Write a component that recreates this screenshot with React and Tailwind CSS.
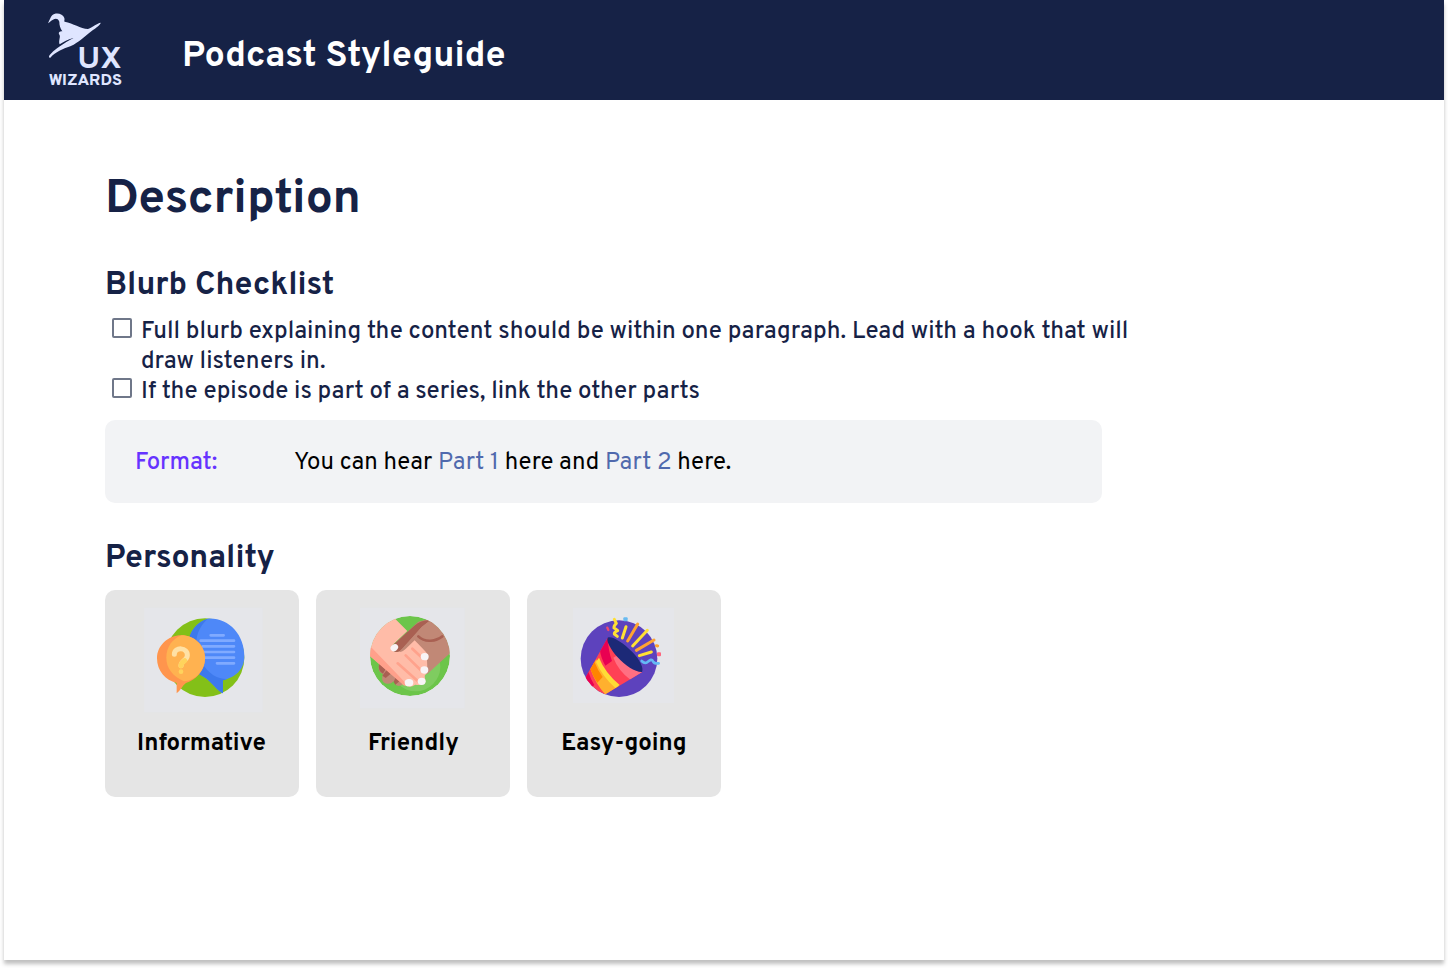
import React from "react";

function Logo() {
  return (
    <svg className="h-[100px] w-[110px] shrink-0" viewBox="0 0 330 300">
      <g fill="#dfe5ff">
        <path d="M54 70C60 58 63 45 73 42C85 38 99 43 103 54C105 60 101 64 104 65C130 70 151 85 174 87C190 80 201 70 212 68C211 75 199 83 185 93C164 109 149 126 121 139C98 147 77 156 61 173C56 174 56 169 59 165C72 149 91 138 109 126L130 114C113 118 101 125 89 133C84 123 93 110 88 104C84 98 88 94 97 94C90 84 88 75 88 65C83 53 75 56 69 59C63 62 59 66 54 70Z" />
        <text x="142" y="203" fontSize="90" fontWeight="700" textLength="134" lengthAdjust="spacingAndGlyphs" className="font-['Overpass','Roboto',sans-serif]">UX</text>
        <text x="56" y="254" fontSize="43" fontWeight="800" textLength="220" lengthAdjust="spacingAndGlyphs" className="font-['Overpass','Roboto',sans-serif]">WIZARDS</text>
      </g>
    </svg>
  );
}

function InformativeArt() {
  return (
    <svg className="h-[137px] w-[194px]" viewBox="105 590 194 137">
      <g transform="translate(140 605) scale(.33333)">
        <rect x="13" y="8" width="355" height="314" fill="#e5e6ea" />
        <circle cx="195" cy="158" r="118" fill="#83c018" />
        <path d="M203 41C266 37 313 89 313 154C313 196 285 217 249 226V265C232 260 216 229 188 214C153 196 142 154 145 115C148 78 171 51 203 41Z" fill="#4e88f8" />
        <path d="M203 41C166 75 161 121 179 158C194 194 219 219 260 223L249 226V265C232 260 216 229 188 214C153 196 142 154 145 115C148 78 171 51 203 41Z" fill="#3d79ec" />
        <path d="M212 91H251M182 107H282M188 124H282M192 141H282M192 158H282M231 175H282" stroke="#80aaff" strokeWidth="8" strokeLinecap="round" />
        <path d="M124 91C163 91 195 121 195 160C195 197 168 224 138 234C127 242 121 257 110 265V234C76 226 51 197 51 160C51 122 84 91 124 91Z" fill="#ff954d" />
        <path d="M124 91C163 91 195 121 195 160C195 198 165 228 132 229C98 213 79 192 79 157C79 126 98 101 124 91Z" fill="#ffb250" />
        <path d="M103 148C103 125 144 126 142 152C141 167 123 166 123 182" fill="none" stroke="#ffe1a5" strokeWidth="15" strokeLinecap="round" />
        <path d="M134 167C128 171 123 175 123 182" fill="none" stroke="#ffd35c" strokeWidth="15" strokeLinecap="round" />
        <circle cx="123" cy="200" r="7" fill="#ffd35c" />
      </g>
    </svg>
  );
}

function FriendlyArt() {
  return (
    <svg className="h-[137px] w-[194px]" viewBox="316 590 194 137">
      <defs>
        <clipPath id="shakeDisc"><circle cx="165" cy="153" r="120" /></clipPath>
      </defs>
      <g transform="translate(355 605) scale(.33333)">
        <rect x="15" y="8" width="314" height="302" fill="#e5e6ea" />
        <g clipPath="url(#shakeDisc)">
          <circle cx="165" cy="153" r="120" fill="#6cc54a" />
          <circle cx="182" cy="185" r="74" fill="#7fcc60" />
          <path d="M72 178L82 175L145 232Q140 247 124 241L116 229Q105 240 91 235Q79 230 82 214L84 207Q67 202 72 178Z" fill="#c18876" />
          <path d="M72 178L82 175L95 187L84 206Q68 199 72 178ZM98 191L111 203L92 219L82 212ZM122 217L134 228L121 239L116 231Z" fill="#a96052" />
          <path d="M112 122L190 50L222 42L290 90V140L216 208L180 165Z" fill="#c18876" />
          <path d="M35 25H104L157 78L112 121Q105 140 127 140Q144 135 177 103L212 140Q225 153 216 165L217 190Q220 202 209 212L211 229Q203 244 181 239Q165 250 150 241L35 145Z" fill="#ffbca8" />
          <path d="M111 123L178 62Q198 45 226 46L200 66L135 139Q122 144 113 137Z" fill="#a96052" />
          <path d="M226 46L200 66L133 141Q144 141 154 130L179 106L215 140L262 94Z" fill="#c18876" />
          <path d="M190 94C211 115 244 108 262 94" fill="none" stroke="#a96052" strokeWidth="8" strokeLinecap="round" />
          <path d="M35 120L48 126L124 205L155 238Q148 248 139 235L35 145Z" fill="#ffa08b" />
          <path d="M172 131L205 162M152 151L203 201M128 175L188 228" stroke="#ffa28c" strokeWidth="8" strokeLinecap="round" />
        </g>
        <g fill="#f8f4f6">
          <ellipse cx="118" cy="128" rx="12" ry="10" transform="rotate(-35 118 128)" />
          <ellipse cx="209" cy="155" rx="12" ry="11" />
          <ellipse cx="208" cy="195" rx="12" ry="11" />
          <ellipse cx="200" cy="229" rx="12" ry="11" />
          <ellipse cx="162" cy="233" rx="13" ry="11" />
        </g>
      </g>
    </svg>
  );
}

function EasyGoingArt() {
  return (
    <svg className="h-[137px] w-[194px]" viewBox="527 590 194 137">
      <defs>
        <clipPath id="partyDisc"><circle cx="162" cy="161" r="115" /></clipPath>
        <clipPath id="partyCone"><path d="M128 98L232 201L121 268L40 270L52 235Z" /></clipPath>
      </defs>
      <g transform="translate(565 605) scale(.33333)">
        <rect x="24" y="8" width="303" height="286" fill="#e5e6ea" />
        <circle cx="162" cy="161" r="115" fill="#5d42bd" />
        <g clipPath="url(#partyDisc)">
          <g clipPath="url(#partyCone)">
            <rect x="35" y="90" width="200" height="190" fill="#ff4055" />
            <path d="M128 98L104 132Q108 160 121 182L141 168Q130 138 128 98Z" fill="#e90052" />
            <path d="M70 200L56 220L76 250L88 240Q77 222 70 200Z" fill="#e90052" />
            <path d="M94 163Q114 207 162 244L122 270Q91 235 76 191Z" fill="#ffb02e" />
            <path d="M88 170L76 191Q84 214 97 233L113 216Q98 195 88 170Z" fill="#ff8500" />
            <path d="M102 158Q120 203 164 240L151 249Q112 214 93 171Z" fill="#ffdc36" />
            <path d="M145 158Q162 144 186 164L232 201L197 225Q160 197 145 158Z" fill="#ff6f82" />
          </g>
        </g>
        <path d="M128 98C139 91 173 111 202 141C226 165 237 190 231 201C211 202 181 183 158 157C137 133 123 108 128 98Z" fill="#1c2977" />
        <g fill="none" strokeWidth="9" strokeLinecap="round" strokeLinejoin="round">
          <path d="M148 43L154 55Q146 62 147 69Q153 72 158 77Q147 82 148 87L157 94M183 65L172 99M247 76L203 123M259 141L223 152" stroke="#ffe034" />
          <path d="M218 57L188 108M267 105L214 136M274 122L278 123" stroke="#ffa331" />
          <path d="M230 168C235 173 240 176 246 172C254 166 260 160 264 169C267 175 273 176 281 175" stroke="#64b9f5" strokeWidth="8" />
        </g>
        <rect x="175" y="37" width="13" height="12" rx="3" fill="#68baf1" />
        <rect x="276" y="142" width="12" height="12" rx="3" fill="#ff647d" />
        <path d="M127 68L130 75" stroke="#ef476f" strokeWidth="7" strokeLinecap="round" />
      </g>
    </svg>
  );
}

function CheckItem({ children }) {
  return (
    <li className="flex">
      <span className="mt-px mr-[9px] ml-[7px] size-5 shrink-0 rounded-[2px] border-2 border-[#6f7789]" />
      <span className="whitespace-nowrap">{children}</span>
    </li>
  );
}

function TraitCard({ art, labelClass = "", children }) {
  return (
    <div className="flex h-[207px] w-[194px] flex-col items-center rounded-[10px] bg-[#e5e5e5]">
      {art}
      <div className={`mt-0.5 text-2xl leading-[30px] font-bold whitespace-nowrap text-black ${labelClass}`}>{children}</div>
    </div>
  );
}

export default function App() {
  return (
    <div className="h-[968px] w-[1448px] overflow-hidden bg-white px-1 font-['Overpass','Roboto',sans-serif] text-[#162246]">
      <div className="h-[960px] w-[1440px] bg-white shadow-[0_4px_4px_rgba(0,0,0,0.25)]">
        <header className="flex h-[100px] bg-[#162246] pl-[26px]">
          <Logo />
          <h1 className="ml-[42px] pt-[35px] text-[36px] leading-[45px] font-bold whitespace-nowrap text-white">Podcast Styleguide</h1>
        </header>
        <main className="pt-[70px] pl-[101px]">
          <h2 className="text-5xl leading-[60px] font-bold">Description</h2>
          <h3 className="mt-9 text-[32px] leading-10 font-bold">Blurb Checklist</h3>
          <ul className="mt-[11px] text-2xl leading-[30px] font-medium">
            <CheckItem>
              <span>Full blurb explaining the content should be within one paragraph. Lead with a hook that will</span>
              <br />
              <span>draw listeners in.</span>
            </CheckItem>
            <CheckItem>If the episode is part of a series, link the other parts</CheckItem>
          </ul>
          <div className="mt-[13px] flex h-[83px] w-[997px] items-center rounded-[10px] bg-[#f2f3f5] pt-0.5 pl-[30px] text-2xl">
            <span className="w-[159px] font-medium text-[#6633ff]">Format:</span>
            <span className="text-black">
              You can hear <a className="text-[#5069ad]">Part 1</a> here and <a className="text-[#5069ad]">Part 2</a> here.
            </span>
          </div>
          <h3 className="mt-9 text-[32px] leading-10 font-bold">Personality</h3>
          <div className="mt-[11px] flex gap-[17px]">
            <TraitCard art={<InformativeArt />} labelClass="mr-px">Informative</TraitCard>
            <TraitCard art={<FriendlyArt />} labelClass="ml-px">Friendly</TraitCard>
            <TraitCard art={<EasyGoingArt />}>Easy-going</TraitCard>
          </div>
        </main>
      </div>
    </div>
  );
}
